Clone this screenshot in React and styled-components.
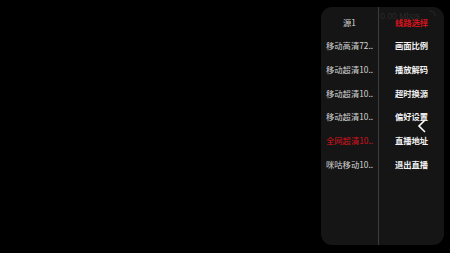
import React from 'react';
import styled, { createGlobalStyle } from 'styled-components';

const Global = createGlobalStyle`
html, body {
    margin: 0;
    padding: 0;
    background: #000;
}
#root {
    width: 450px;
    height: 253px;
}
`

const Screen = styled.div`
position: relative;
width: 450px;
height: 253px;
background: #000;
display: flex;
justify-content: flex-end;
font-family: "Noto Sans CJK SC", "Noto Sans", sans-serif;
`

const Panel = styled.div`
margin: 7px 6px 8px 0;
width: 123px;
background: #151515;
border-radius: 11px;
display: flex;
overflow: hidden;
`

const Column = styled.ul`
list-style: none;
margin: 0;
padding: 3px 0 0;
width: ${p => p.width}px;
border-right: ${p => p.divider ? '1px solid #3c3c3c' : 'none'};
`

const Item = styled.li`
height: 23.67px;
display: flex;
align-items: center;
justify-content: center;
font-size: 8.3px;
font-weight: ${p => p.bold ? 700 : 400};
color: ${p => p.active ? '#d8131c' : (p.bold ? '#f2f2f2' : '#d6d6d6')};
white-space: nowrap;
`

const Speed = styled.div`
position: absolute;
top: 10px;
right: 14px;
display: flex;
align-items: center;
gap: 4px;
font-family: "Liberation Sans", sans-serif;
font-size: 8.5px;
color: #2a2a2a;
`

const Back = styled.svg`
position: absolute;
left: 416px;
top: 118px;
`

const sources = ['源1', '移动高清72..', '移动超清10..', '移动超清10..', '移动超清10..', '全网超清10..', '咪咕移动10..'];
const menu = ['线路选择', '画面比例', '播放解码', '超时换源', '偏好设置', '直播地址', '退出直播'];

export default function App() {
    return (
        <Screen>
            <Global />
            <Panel>
                <Column width={57} divider>
                    {sources.map((s, i) => (
                        <Item key={i} active={i === 5}>{s}</Item>
                    ))}
                </Column>
                <Column width={65}>
                    {menu.map((m, i) => (
                        <Item key={i} bold active={i === 0}>{m}</Item>
                    ))}
                </Column>
            </Panel>
            <Speed>
                <span>0.00 Mbps</span>
                <svg width="12" height="12" viewBox="0 0 12 12">
                    <path d="M6 1 A5 5 0 0 1 11 6" stroke="#2a2a2a" strokeWidth="1" fill="none" />
                </svg>
            </Speed>
            <Back width="12" height="16" viewBox="0 0 12 16">
                <path d="M9 2 L3 8 L9 14" stroke="#fff" strokeWidth="1.6" fill="none" />
            </Back>
        </Screen>
    );
}
